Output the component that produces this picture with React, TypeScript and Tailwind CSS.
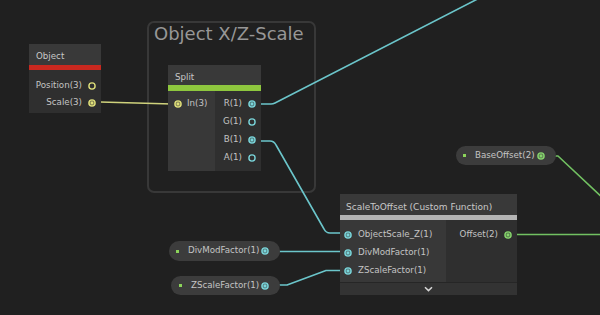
import React from "react";

const CYAN = "#7ad6db";
const GREEN = "#86d46c";
const YELLOW = "#e0e07a";

function Port({ color, connected = false }: { color: string; connected?: boolean }) {
  return (
    <svg width="8" height="8" viewBox="0 0 8 8" className="shrink-0">
      <circle cx="4" cy="4" r="3.1" fill={connected ? color : "none"} fillOpacity={0.45} stroke={color} strokeWidth={1.4} />
      {connected && <circle cx="4" cy="4" r="1.4" fill={color} />}
    </svg>
  );
}

function OutRow({ label, color, connected, h = "h-[18px]" }: { label: string; color: string; connected?: boolean; h?: string }) {
  return (
    <div className={`flex ${h} items-center justify-end gap-[6px] pr-[5px]`}>
      <span>{label}</span>
      <Port color={color} connected={connected} />
    </div>
  );
}

function Pill({
  label,
  color,
  className,
}: {
  label: string;
  color: string;
  className: string;
}) {
  return (
    <div className={`absolute flex items-center rounded-full bg-[#3c3c3c] pl-[7px] pr-[11px] text-[#c4c4c4] ${className}`}>
      <div className="h-[3px] w-[3px] bg-[#8bd45a]" />
      <span className="ml-[9px]">{label}</span>
      <div className="ml-auto">
        <Port color={color} connected />
      </div>
    </div>
  );
}

export default function App() {
  return (
    <div className="relative h-[315px] w-[600px] overflow-hidden bg-[#202020] font-['DejaVu_Sans',sans-serif] text-[8.7px] text-[#c4c4c4]">
      {/* group */}
      <div className="absolute left-[147px] top-[21px] h-[172px] w-[169px] rounded-[7px] border-2 border-[#383838]">
        <div className="pl-[5px] pt-[2px] text-[18px] leading-[18px] text-[#979797]">Object X/Z-Scale</div>
      </div>

      {/* wires */}
      <svg className="absolute inset-0" width="600" height="315" fill="none" strokeWidth={1.6} strokeLinejoin="round">
        <path d="M96 102 H100 L172 104 H176" stroke="#cfd27c" />
        <path d="M255 104 H271 Q273 104 275 103 L610 -69" stroke="#6bc5ca" />
        <path d="M255 141 H270 Q274 141 276 145 L324 229 Q326 233 330 233 H345" stroke="#6bc5ca" />
        <path d="M269 251.5 H345" stroke="#6bc5ca" />
        <path d="M269 285 H287 L326 270.5 H345" stroke="#6bc5ca" />
        <path d="M545 156 H558 L620 214" stroke="#72c162" />
        <path d="M512 234.5 H600" stroke="#72c162" />
      </svg>

      {/* Object node */}
      <div className="absolute left-[29px] top-[44px] w-[72px]">
        <div className="flex h-[21px] items-center bg-[#393939] pl-[7px] pt-[5px] text-[#c8c8c8]">Object</div>
        <div className="h-[5px] bg-[#c9281f]" />
        <div className="bg-[#2f2f2f] pb-[2px] pt-[7px]">
          <OutRow label="Position(3)" color={YELLOW} h="h-[17px]" />
          <OutRow label="Scale(3)" color={YELLOW} connected h="h-[17px]" />
        </div>
      </div>

      {/* Split node */}
      <div className="absolute left-[168px] top-[65px] w-[93px]">
        <div className="flex h-[20px] items-center bg-[#393939] pl-[7px] pt-[6px] text-[#c8c8c8]">Split</div>
        <div className="h-[6px] bg-[#8ec73e]" />
        <div className="flex h-[80px]">
          <div className="w-[47px] bg-[#383838] pt-[4px]">
            <div className="flex h-[18px] items-center gap-[5px] pl-[6px]">
              <Port color={YELLOW} connected />
              <span>In(3)</span>
            </div>
          </div>
          <div className="flex-1 bg-[#2f2f2f] pt-[4px]">
            <OutRow label="R(1)" color={CYAN} connected />
            <OutRow label="G(1)" color={CYAN} />
            <OutRow label="B(1)" color={CYAN} connected />
            <OutRow label="A(1)" color={CYAN} />
          </div>
        </div>
      </div>

      {/* ScaleToOffset node */}
      <div className="absolute left-[340px] top-[194px] w-[177px]">
        <div className="flex h-[21px] items-center bg-[#393939] pl-[6px] pt-[6px] text-[9px] text-[#c8c8c8]">
          ScaleToOffset (Custom Function)
        </div>
        <div className="h-[5px] bg-[#b4b4b4]" />
        <div className="flex h-[62px]">
          <div className="w-[106px] bg-[#383838] pt-[6px]">
            {["ObjectScale_Z(1)", "DivModFactor(1)", "ZScaleFactor(1)"].map((l) => (
              <div key={l} className="flex h-[18px] items-center gap-[6px] pl-[4px]">
                <Port color={CYAN} connected />
                <span>{l}</span>
              </div>
            ))}
          </div>
          <div className="flex-1 bg-[#2f2f2f] pt-[6px]">
            <OutRow label="Offset(2)" color={GREEN} connected />
          </div>
        </div>
        <div className="flex h-[13px] items-center justify-center border-t border-[#262626] bg-[#333333]">
          <svg width="9" height="6" viewBox="0 0 9 6">
            <path d="M1 1.2 L4.5 4.6 L8 1.2" stroke="#d6d6d6" strokeWidth={1.5} fill="none" />
          </svg>
        </div>
      </div>

      {/* property pills */}
      <Pill label="DivModFactor(1)" color={CYAN} className="left-[169px] top-[241px] h-[20px] w-[111px]" />
      <Pill label="ZScaleFactor(1)" color={CYAN} className="left-[171px] top-[276px] h-[19px] w-[109px] pl-[8px]" />
      <Pill label="BaseOffset(2)" color={GREEN} className="left-[456px] top-[146px] h-[19px] w-[100px]" />
    </div>
  );
}
